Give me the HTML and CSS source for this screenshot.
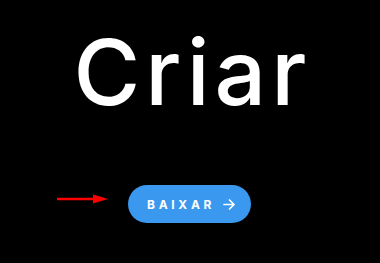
FILE: index.html
```html
<!DOCTYPE html>
<html lang="pt">
<head>
<meta charset="utf-8">
<link rel="stylesheet" href="styles.css">
</head>
<body>
<main class="page">
  <h1 class="title">Criar</h1>
  <div class="cta">
    <svg class="pointer" width="52" height="12" viewBox="0 0 52 12" aria-hidden="true">
      <line x1="0" y1="6" x2="38" y2="6" stroke="#ff0000" stroke-width="2.5"/>
      <polygon points="36,1.5 51,6 36,10.5" fill="#ff0000"/>
    </svg>
    <a class="btn" href="#">BAIXAR
      <svg class="btn-arrow" width="12" height="11" viewBox="0 0 12 11" aria-hidden="true">
        <path d="M1 5.5 H11 M6.5 1 L11 5.5 L6.5 10" fill="none" stroke="#fff" stroke-width="1.7" stroke-linecap="round" stroke-linejoin="round"/>
      </svg>
    </a>
  </div>
</main>
</body>
</html>
```
FILE: styles.css
```css
html, body {
  margin: 0;
  padding: 0;
  background: #000;
}
.page {
  width: 380px;
  height: 263px;
  display: flex;
  flex-direction: column;
  align-items: center;
  font-family: Inter, "Liberation Sans", sans-serif;
}
.title {
  margin: 19px -5px 0 0;
  font-size: 91px;
  font-weight: 500;
  line-height: 106px;
  color: #fff;
  letter-spacing: 5px;
}
.cta {
  position: relative;
  margin-top: 60px;
  margin-left: -1px;
}
.pointer {
  position: absolute;
  left: -71px;
  top: 8px;
}
.btn {
  display: flex;
  align-items: center;
  gap: 8px;
  box-sizing: border-box;
  width: 123px;
  height: 38px;
  padding-left: 19px;
  border-radius: 19px;
  background: #3a98ee;
  color: #fff;
  text-decoration: none;
  font-size: 12px;
  font-weight: 700;
  letter-spacing: 3.7px;
}
.btn-arrow {
  display: block;
}
```
